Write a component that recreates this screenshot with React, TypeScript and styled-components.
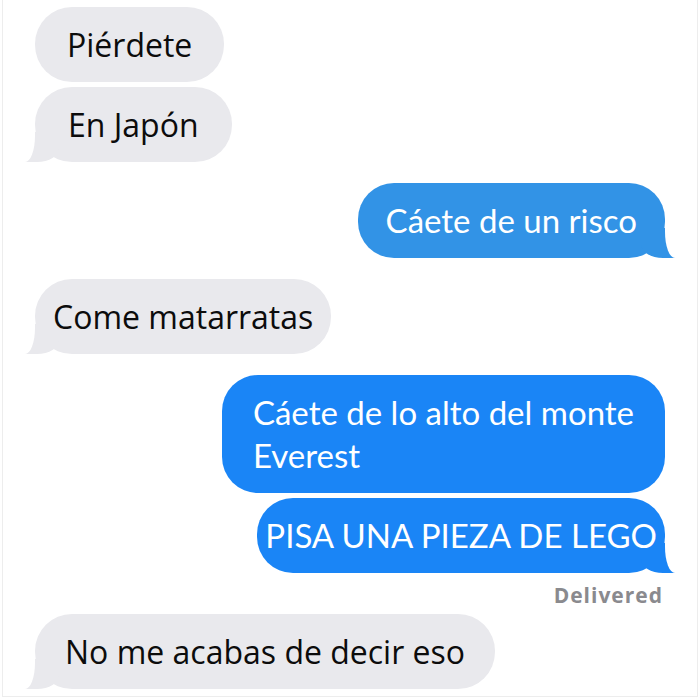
import styled, { createGlobalStyle, css } from 'styled-components';

const GlobalStyle = createGlobalStyle`
  html, body {
    margin: 0;
    padding: 0;
    background: #ffffff;
  }
`;

const GRAY = '#e9e9ed';
const BLUE = '#1a85f6';
const BLUE_SOFT = '#3293e6';

export const Screen = styled.div`
  width: 696px;
  height: 697px;
  margin: 0 2px;
  border: 1px solid #ededed;
  border-top: none;
  box-sizing: border-box;
  padding: 7px 32px 0 32px;
  display: flex;
  flex-direction: column;
  gap: 21px;
  overflow: hidden;
`;

export const Cluster = styled.div<{ $mine?: boolean }>`
  display: flex;
  flex-direction: column;
  align-items: ${(p) => (p.$mine ? 'flex-end' : 'flex-start')};
  gap: 5px;
`;

// the little curved tail under the last bubble of a run
const tail = (side: 'left' | 'right', color: string) => css`
  &::before,
  &::after {
    content: '';
    position: absolute;
    bottom: 0;
    z-index: -1;
  }
  &::before {
    ${side}: -10px;
    width: 34px;
    height: 30px;
    background: ${color};
    border-bottom-${side === 'left' ? 'right' : 'left'}-radius: 22px 14px;
  }
  &::after {
    ${side}: -40px;
    width: 40px;
    height: 32px;
    background: #ffffff;
    border-bottom-${side === 'left' ? 'right' : 'left'}-radius: 10px 26px;
  }
`;

export const Received = styled.div<{ $tail?: boolean; $px?: number }>`
  position: relative;
  z-index: 0;
  box-sizing: border-box;
  padding: 16px ${(p) => p.$px ?? 33}px;
  background: ${GRAY};
  border-radius: 37px;
  color: #0c0c0c;
  font-family: 'Open Sans', 'Noto Sans', sans-serif;
  font-size: 32px;
  line-height: 43px;
  white-space: nowrap;
  ${(p) => p.$tail && tail('left', GRAY)}
`;

export const Sent = styled.div<{ $tail?: boolean; $px?: number; $soft?: boolean }>`
  position: relative;
  z-index: 0;
  box-sizing: border-box;
  padding: 16px ${(p) => p.$px ?? 28}px;
  background: ${(p) => (p.$soft ? BLUE_SOFT : BLUE)};
  border-radius: 36px;
  color: #ffffff;
  font-family: Lato, 'Noto Sans', sans-serif;
  font-size: 33px;
  line-height: 43px;
  white-space: pre-line;
  ${(p) => p.$tail && tail('right', p.$soft ? BLUE_SOFT : BLUE)}
`;

export const Status = styled.div`
  margin-top: 7px;
  margin-bottom: -12px;
  padding-right: 2px;
  font-family: 'Open Sans', 'Liberation Sans', sans-serif;
  font-weight: 700;
  font-size: 21px;
  letter-spacing: 1px;
  line-height: 20px;
  color: #8a8a8e;
`;

export default function App() {
  return (
    <>
      <GlobalStyle />
      <Screen>
        <Cluster>
          <Received $px={32}>Piérdete</Received>
          <Received $tail>En Japón</Received>
        </Cluster>
        <Cluster $mine>
          <Sent $soft $tail>Cáete de un risco</Sent>
        </Cluster>
        <Cluster>
          <Received $tail $px={18}>Come matarratas</Received>
        </Cluster>
        <Cluster $mine>
          <Sent $px={31}>{'Cáete de lo alto del monte\nEverest'}</Sent>
          <Sent $tail $px={8}>PISA UNA PIEZA DE LEGO</Sent>
          <Status>Delivered</Status>
        </Cluster>
        <Cluster>
          <Received $tail $px={30}>No me acabas de decir eso</Received>
        </Cluster>
      </Screen>
    </>
  );
}
